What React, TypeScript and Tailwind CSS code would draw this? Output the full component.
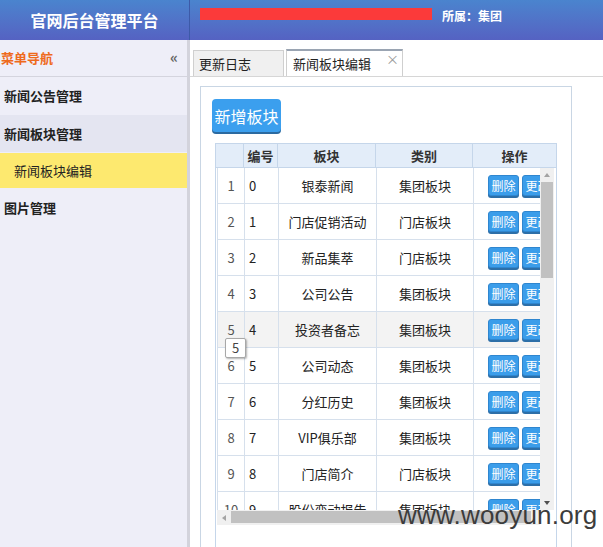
import React from "react";

const rows = [
  ["0", "银泰新闻", "集团板块"],
  ["1", "门店促销活动", "门店板块"],
  ["2", "新品集萃", "门店板块"],
  ["3", "公司公告", "集团板块"],
  ["4", "投资者备忘", "集团板块"],
  ["5", "公司动态", "集团板块"],
  ["6", "分红历史", "集团板块"],
  ["7", "VIP俱乐部", "集团板块"],
  ["8", "门店简介", "门店板块"],
  ["9", "股份变动报告", "集团板块"],
];

const font = { fontFamily: '"Noto Sans CJK SC", "Liberation Sans", sans-serif' };

function Btn({ label }: { label: string }) {
  return (
    <div className="h-[21px] w-[31px] shrink-0 rounded-[3px] bg-[#3b9dea] text-white text-[12px] leading-[20px] text-center shadow-[0_2px_0_#2d6fa8] border border-[#2f86cf]">
      {label}
    </div>
  );
}

export default function App() {
  return (
    <div className="w-[603px] h-[547px] overflow-hidden bg-white relative text-[#222]" style={font}>
      {/* Header */}
      <div className="h-[40px] flex bg-gradient-to-b from-[#4a84ce] to-[#5562c2]">
        <div className="w-[190px] border-r border-[#3d5aa8] flex items-center justify-center text-white font-bold text-[16px]">
          官网后台管理平台
        </div>
        <div className="flex-1 flex items-start pt-[8px] pl-[10px] gap-[10px]">
          <div className="w-[232px] h-[12px] bg-[#fb3a3a]" />
          <div className="text-white font-bold text-[12px] leading-[14px] pt-[1px]">所属：集团</div>
        </div>
      </div>

      <div className="flex h-[507px]">
        {/* Sidebar */}
        <div className="w-[190px] bg-[#eeeef8] border-r-[3px] border-[#d3d3dc] flex flex-col">
          <div className="h-[37px] flex items-center justify-between px-[1px] border-b border-[#d4d4de]">
            <span className="text-[#ee6a1c] font-bold text-[13px]">菜单导航</span>
            <span className="text-[#666] font-bold text-[15px] leading-none pr-[8px] -mt-[4px]">«</span>
          </div>
          <div className="h-[38px] flex items-center pl-[4px] font-bold text-[13px]">新闻公告管理</div>
          <div className="h-[37px] flex items-center pl-[4px] font-bold text-[13px] bg-[#e4e5f1]">新闻板块管理</div>
          <div className="h-[35px] mt-[1px] flex items-center pl-[14px] text-[13px] bg-[#fde96f]">新闻板块编辑</div>
          <div className="h-[40px] flex items-center pl-[4px] font-bold text-[13px]">图片管理</div>
        </div>

        {/* Main */}
        <div className="flex-1 flex flex-col">
          <div className="h-[37px] flex items-end gap-[2px] pl-[3px] border-b border-[#d6d6d6]">
            <div className="w-[91px] h-[26px] bg-[#f0f0f0] border border-b-0 border-[#cfcfcf] flex items-center pl-[5px] text-[13px]">
              更新日志
            </div>
            <div className="w-[117px] h-[27px] bg-white border border-b-0 border-[#cfcfcf] border-t-[2px] border-t-[#9aa4b2] flex items-center pl-[6px] text-[13px] relative">
              新闻板块编辑
              <span className="absolute right-[3px] top-[1px] text-[#999] text-[13px] leading-none">×</span>
            </div>
          </div>

          <div className="ml-[10px] mt-[9px] w-[372px] flex-1 border border-b-0 border-[#c9d6e4] flex flex-col">
            <div className="pl-[11px] pt-[12px]">
              <div className="w-[69px] h-[33px] rounded-[4px] bg-[#3b9fee] text-white text-[16px] flex items-center justify-center shadow-[0_2px_0_#2b6aa0]">
                新增板块
              </div>
            </div>

            <div className="ml-[14px] mt-[11px] w-[342px] flex flex-col flex-1">
              {/* Table header */}
              <div className="h-[25px] flex bg-[#e3edf9] border border-[#c5d6ea] text-[13px] font-bold text-[#333]">
                <div className="w-[28px] border-r border-[#c5d6ea]" />
                <div className="w-[34px] border-r border-[#c5d6ea] flex items-center justify-center">编号</div>
                <div className="w-[98px] border-r border-[#c5d6ea] flex items-center justify-center">板块</div>
                <div className="w-[97px] border-r border-[#c5d6ea] flex items-center justify-center">类别</div>
                <div className="flex-1 flex items-center justify-center">操作</div>
              </div>
              {/* Body */}
              <div className="flex-1 flex flex-col border-x border-[#c5d6ea]">
                <div className="h-[342px] flex">
                  <div className="w-[323px] overflow-hidden ml-[1px]">
                    {rows.map((r, i) => (
                      <div
                        key={i}
                        className={`h-[36px] flex text-[13px] border-b border-[#d6e0ec] ${i === 4 ? "bg-[#f3f3f3]" : ""}`}
                      >
                        <div className="w-[28px] shrink-0 border-x border-[#d6e0ec] flex items-center justify-center text-[#555]">{i + 1}</div>
                        <div className="w-[34px] shrink-0 border-r border-[#d6e0ec] flex items-center pl-[4px]">{r[0]}</div>
                        <div className="w-[98px] shrink-0 border-r border-[#d6e0ec] flex items-center justify-center">{r[1]}</div>
                        <div className="w-[97px] shrink-0 border-r border-[#d6e0ec] flex items-center justify-center">{r[2]}</div>
                        <div className="w-[84px] shrink-0 flex items-center pl-[14px] gap-[3px]">
                          <Btn label="删除" />
                          <Btn label="更改" />
                        </div>
                      </div>
                    ))}
                  </div>
                  {/* vertical scrollbar */}
                  <div className="w-[14px] bg-[#f0f0f0] flex flex-col items-center">
                    <div className="h-[14px] flex items-center justify-center">
                      <div className="w-0 h-0 border-x-[3px] border-x-transparent border-b-[4px] border-b-[#a3a3a3]" />
                    </div>
                    <div className="w-[12px] h-[96px] bg-[#c1c1c1]" />
                    <div className="flex-1" />
                    <div className="h-[14px] flex items-center justify-center">
                      <div className="w-0 h-0 border-x-[3px] border-x-transparent border-t-[4px] border-t-[#505050]" />
                    </div>
                  </div>
                </div>
                {/* horizontal scrollbar */}
                <div className="h-[15px] flex ml-[1px] w-[323px] bg-[#f0f0f0]">
                  <div className="w-[14px] flex items-center justify-center">
                    <div className="w-0 h-0 border-y-[3px] border-y-transparent border-r-[4px] border-r-[#a3a3a3]" />
                  </div>
                  <div className="w-[300px] h-[12px] mt-[1px] bg-[#c1c1c1]" />
                </div>
              </div>
            </div>
          </div>
        </div>
      </div>

      {/* tooltip */}
      <div className="absolute left-[225px] top-[338px] w-[21px] h-[20px] bg-white border border-[#a8a8a8] rounded-[2px] shadow-[1px_1px_2px_rgba(0,0,0,0.3)] flex items-center justify-center text-[13px] text-[#444]">
        5
      </div>

      {/* watermark */}
      <div
        className="absolute left-[398px] top-[499px] text-[26px] text-[#3c3c3c] tracking-[0.2px] leading-[32px]"
        style={{ fontFamily: '"Liberation Sans", Arial, sans-serif' }}
      >
        www.wooyun.org
      </div>
    </div>
  );
}
